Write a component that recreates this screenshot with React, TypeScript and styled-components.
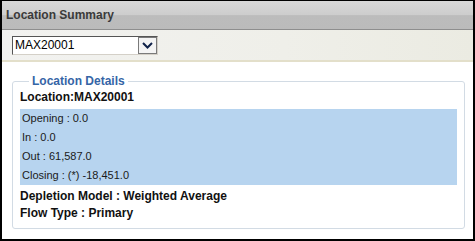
import React from "react";
import styled, { createGlobalStyle } from "styled-components";

const GlobalStyle = createGlobalStyle`
  html, body {
    margin: 0;
    padding: 0;
    background: #ffffff;
  }
  * {
    box-sizing: border-box;
  }
`;

const rows = ["Opening : 0.0", "In : 0.0", "Out : 61,587.0", "Closing : (*) -18,451.0"];

function App() {
  return (
    <>
      <GlobalStyle />
      <Frame>
        <Header>Location Summary</Header>
        <Toolbar>
          <FakeSelect>
            <SelectValue>MAX20001</SelectValue>
            <SelectButton>
              <svg width="11" height="7" viewBox="0 0 11 7">
                <path d="M1 1 L5.5 5.5 L10 1" fill="none" stroke="#10224a" strokeWidth="2" />
              </svg>
            </SelectButton>
          </FakeSelect>
        </Toolbar>
        <Content>
          <DetailsSet>
            <Legend>Location Details</Legend>
            <BoldLine>Location:MAX20001</BoldLine>
            <StatsBox>
              {rows.map((r) => (
                <StatRow key={r}>{r}</StatRow>
              ))}
            </StatsBox>
            <BoldLine>Depletion Model : Weighted Average</BoldLine>
            <BoldLine>Flow Type : Primary</BoldLine>
          </DetailsSet>
        </Content>
      </Frame>
    </>
  );
}

export default App;

const Frame = styled.div`
  width: 475px;
  height: 241px;
  border-top: 1px solid #000;
  border-left: 2px solid #000;
  border-right: 2px solid #000;
  border-bottom: 2px solid #000;
  font-family: "Liberation Sans", Arial, sans-serif;
  display: flex;
  flex-direction: column;
  background: #fff;
`;

const Header = styled.div`
  height: 29px;
  padding-left: 4px;
  display: flex;
  align-items: center;
  font-size: 12px;
  font-weight: bold;
  color: #3a3a3a;
  background: linear-gradient(to bottom, #d8d8d8 0%, #cdcdcd 50%, #bcbcbc 52%, #bbbbbb 100%);
  border-bottom: 1px solid #8e8e8e;
`;

const Toolbar = styled.div`
  height: 32px;
  padding: 6px 0 0 10px;
  background: linear-gradient(to right, #f2f2f0 0%, #efefe9 60%, #ebebe2 100%);
  border-bottom: 2px solid #e3dfca;
`;

const FakeSelect = styled.div`
  width: 146px;
  height: 19px;
  display: flex;
  background: #fff;
  border-top: 1px solid #555;
  border-left: 1px solid #555;
  border-right: 1px solid #d4d0c8;
  border-bottom: 1px solid #d4d0c8;
`;

const SelectValue = styled.div`
  flex: 1;
  padding-left: 2px;
  font-size: 12px;
  line-height: 17px;
  color: #000;
`;

const SelectButton = styled.div`
  width: 19px;
  height: 17px;
  display: flex;
  align-items: center;
  justify-content: center;
  background: #f4f4f4;
  border: 1px solid #7a7a7a;
`;

const Content = styled.div`
  flex: 1;
  padding: 11px 9px 0 10px;
`;

const DetailsSet = styled.fieldset`
  margin: 0;
  width: 453px;
  padding: 0 7px 6px 7px;
  border: 1px solid #d2dbe4;
  border-radius: 3px;
`;

const Legend = styled.legend`
  margin-left: 9px;
  padding: 0 3px;
  font-size: 12px;
  line-height: 16px;
  font-weight: bold;
  color: #3565a6;
`;

const BoldLine = styled.div`
  font-size: 12px;
  line-height: 17px;
  font-weight: bold;
  color: #111;
`;

const StatsBox = styled.div`
  margin: 3px 0 3px 0;
  background: #b7d4ef;
`;

const StatRow = styled.div`
  height: 19px;
  padding-left: 2px;
  font-size: 11px;
  line-height: 19px;
  color: #1a1a1a;
`;
